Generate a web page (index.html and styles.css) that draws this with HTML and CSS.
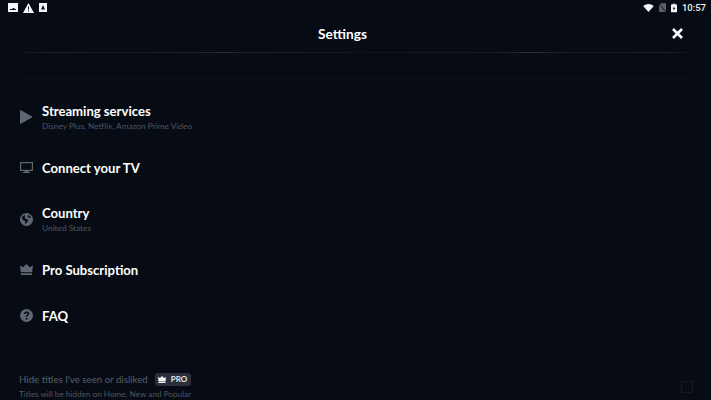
FILE: index.html
```html
<!DOCTYPE html>
<html lang="en">
<head>
  <meta charset="UTF-8">
  <meta name="viewport" content="width=device-width, initial-scale=1.0">
  <title>Settings</title>
  <link rel="stylesheet" href="styles.css">
</head>
<body>
  <div class="status-bar">
    <div class="status-left">
      <svg width="10" height="9" viewBox="0 0 10 9"><path fill="#f4f5f6" fill-rule="evenodd" d="M0 0h10v9H0zM2 6v1h6V6H6.500V5h-2v1z"/></svg>
      <svg width="11" height="10" viewBox="0 0 11 10"><path fill="#f4f5f6" fill-rule="evenodd" d="M5.500 0L11 10H0zM5 3.500v3h1v-3zM5 7.500v1h1v-1z"/></svg>
      <svg width="8" height="9" viewBox="0 0 8 9"><path fill="#f4f5f6" fill-rule="evenodd" d="M0 0h8v9H0zM4 2L2 6.500h4z"/></svg>
    </div>
    <div class="status-right">
      <svg width="11" height="8" viewBox="0 0 12 9"><path fill="#f4f5f6" d="M0 2.200Q6-2 12 2.200L6 9z"/></svg>
      <svg width="7" height="9" viewBox="0 0 8 10"><path fill="#5b5f66" d="M2 0h6v10H0V2z"/><path stroke="#060b14" d="M0 1l8 9"/></svg>
      <svg width="6" height="10" viewBox="0 0 7 10"><path fill="#f4f5f6" fill-rule="evenodd" d="M2 0h3v1h2v9H0V1h2zM4 3L2 6h1.200L3 8l2-3H3.800z"/></svg>
      <span class="clock">10:57</span>
    </div>
  </div>

  <header class="title-bar">
    <h1>Settings</h1>
    <svg class="close" width="11" height="11" viewBox="0 0 11 11"><path stroke="#fff" stroke-width="2.600" d="M1 1l9 9M10 1l-9 9"/></svg>
  </header>

  <div class="divider-top"></div>
  <div class="divider-second"></div>

  <ul class="menu">
    <li class="row">
      <svg class="icon icon-up" width="13" height="14" viewBox="0 0 13 14"><path fill="#5d6872" stroke="#5d6872" stroke-width="1" stroke-linejoin="round" d="M.500 .500l11.500 6.500-11.500 6.500z"/></svg>
      <div>
        <div class="row-title">Streaming services</div>
        <div class="row-sub">Disney Plus, Netflix, Amazon Prime Video</div>
      </div>
    </li>
    <li class="row row-single">
      <svg class="icon" width="13" height="11" viewBox="0 0 13 11"><path fill="#5d6872" fill-rule="evenodd" d="M0 0h13v9H8.500v1H10v1H3v-1h1.500V9H0zM1.200 1.200v6.600h10.600V1.200z"/></svg>
      <div class="row-title">Connect your TV</div>
    </li>
    <li class="row">
      <svg class="icon" width="13" height="13" viewBox="0 0 14 14"><path fill="#5d6872" fill-rule="evenodd" d="M7 0a7 7 0 1 1 0 14A7 7 0 0 1 7 0zM5 2L2 4.500l1 3 2.500 1L6 12l2-2.500 1-2-3.500-1.500zM9 2l-1 2 2.500 1.500L12 5z"/></svg>
      <div>
        <div class="row-title">Country</div>
        <div class="row-sub">United States</div>
      </div>
    </li>
    <li class="row row-single">
      <svg class="icon" width="13" height="11" viewBox="0 0 14 12"><path fill="#5d6872" d="M0 1.500l3.500 2L7 0l3.500 3.500 3.500-2-.8 7.500H.8zM.8 10h12.400v2H.8z"/></svg>
      <div class="row-title">Pro Subscription</div>
    </li>
    <li class="row row-single row-short">
      <svg class="icon" width="13" height="13" viewBox="0 0 13 13"><path fill="#5d6872" fill-rule="evenodd" d="M6.500 0a6.500 6.500 0 1 1 0 13a6.500 6.500 0 0 1 0-13zM5.700 9v1.700h1.700V9zM3.800 5h1.600q.1-1.200 1.200-1.200 1.100.1 1 1c0 .9-1.900 1.200-1.900 3h1.600c0-1.300 2-1.500 2-3.200C9.300 3.200 8 2.400 6.600 2.400 5 2.400 3.800 3.400 3.800 5z"/></svg>
      <div class="row-title">FAQ</div>
    </li>
  </ul>

  <div class="divider-bottom"></div>

  <section class="hide-titles">
    <div class="hide-line">
      <span class="hide-label">Hide titles I've seen or disliked</span>
      <span class="pro-badge">
        <svg width="8" height="7" viewBox="0 0 14 12"><path fill="#f4f5f6" d="M0 1.500l3.500 2L7 0l3.500 3.500 3.500-2-.8 7.500H.8zM.8 10h12.400v2H.8z"/></svg>
        PRO
      </span>
    </div>
    <div class="hide-sub">Titles will be hidden on Home, New and Popular</div>
    <div class="checkbox"></div>
  </section>
</body>
</html>
```

FILE: styles.css
```css
body {
  margin: 0;
  height: 400px;
  overflow: hidden;
  background-color: #060b14;
  font-family: Lato, sans-serif;
  color: #fff;
}
.status-bar {
  display: flex;
  justify-content: space-between;
  align-items: center;
  height: 15px;
  padding: 0 5px 0 8px;
}
.status-left {
  display: flex;
  align-items: center;
  gap: 5px;
}
.status-right {
  display: flex;
  align-items: center;
  gap: 5px;
}
.clock {
  font-family: Roboto, sans-serif;
  font-size: 9.500px;
  font-weight: 500;
  color: #f0f1f2;
}
.title-bar {
  display: flex;
  justify-content: center;
  align-items: center;
  position: relative;
  height: 37px;
  padding-right: 26px;
}
.title-bar h1 {
  margin: 0;
  font-size: 13.700px;
  font-weight: 700;
}
.close {
  position: absolute;
  right: 28px;
  top: 13px;
}
.divider-top {
  height: 1px;
  margin: 0 20px;
  background: linear-gradient(to right, #0d1219 0, #1e252c 5%, #12171e 15%, #232a31 30%, #10151c 50%, #12171c 70%, #2b3036 76%, #12171e 84%, #1c2229 97%, #0a0f16 100%);
}
.divider-second {
  height: 1px;
  margin: 26px 20px 0;
  background-color: #0b1019;
}
.menu {
  list-style: none;
  margin: 0;
  padding: 0 0 0 20px;
}
.row {
  display: flex;
  align-items: center;
  gap: 9px;
  height: 51px;
  box-sizing: border-box;
}
.row-single {
  padding-bottom: 2px;
}
.row-short {
  height: 41px;
}
.row:first-child {
  margin-top: 12px;
}
.icon {
  flex-shrink: 0;
}
.icon-up {
  margin-bottom: 1px;
}
.row-title {
  font-size: 13.100px;
  font-weight: 700;
  line-height: 16px;
  color: #fff;
}
.row-sub {
  margin-top: 1px;
  font-size: 8.300px;
  line-height: 12px;
  color: #50565f;
}
.divider-bottom {
  height: 1px;
  margin: 11px 20px 0;
  background-color: #0b1019;
}
.hide-titles {
  position: relative;
  padding: 23px 19px 0;
}
.hide-line {
  display: flex;
  align-items: center;
  gap: 7px;
  height: 14px;
}
.hide-label {
  font-size: 9.700px;
  color: #5b6069;
}
.pro-badge {
  display: flex;
  align-items: center;
  gap: 5px;
  height: 13px;
  padding: 0 4px 0 3px;
  border-radius: 3px;
  background-color: #2a2f3b;
  font-size: 8px;
  font-weight: 700;
  color: #e6e7e9;
}
.hide-sub {
  margin-top: 2px;
  font-size: 8.200px;
  line-height: 12px;
  color: #50565f;
}
.checkbox {
  position: absolute;
  right: 18px;
  top: 32px;
  width: 10px;
  height: 10px;
  border: 1px solid #141a22;
}
```
